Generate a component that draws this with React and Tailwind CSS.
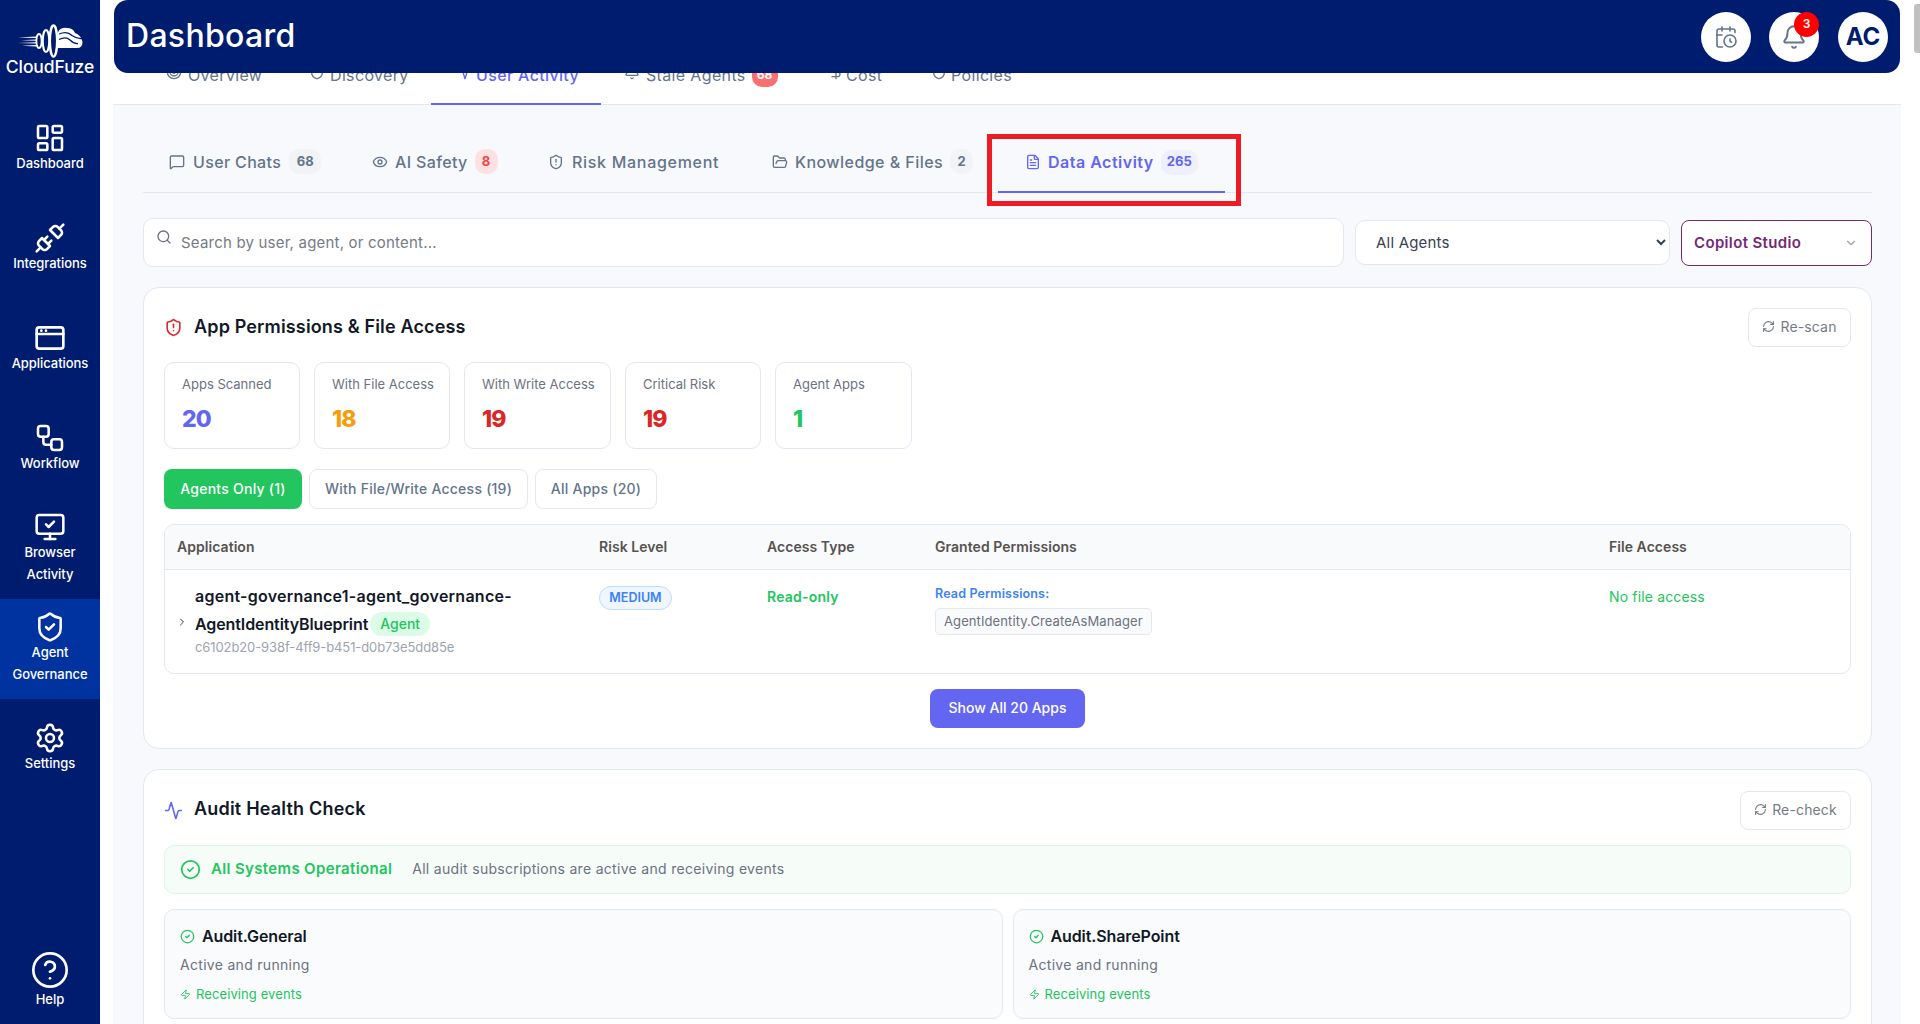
import React from "react";
import {
  LayoutDashboard, Unplug, Workflow, MonitorCheck, ShieldCheck, Settings, CircleHelp,
  CalendarClock, Bell, Target, Shield, Activity, DollarSign, MessageSquare, Eye, ShieldAlert,
  FolderOpen, FileText, Search, ChevronDown, ChevronRight, RefreshCw, CircleCheck, Zap,
} from "lucide-react";

function AppWin({ size = 32 }) {
  return (
    <svg width={size} height={size} viewBox="0 0 24 24" fill="none" stroke="currentColor" strokeWidth="2" strokeLinecap="round" strokeLinejoin="round">
      <rect x="2" y="4" width="20" height="16" rx="2" />
      <path d="M2 9h20M5.5 6.5h.01M9 6.5h.01" />
    </svg>
  );
}

function Logo() {
  return (
    <svg width="66" height="34" viewBox="0 0 66 34" fill="none">
      <path d="M1 13.5 L19 12.6 L19 14 Z M4 16.2 L19 15.4 L19 16.8 Z M1 19 L19 18.2 L19 19.6 Z M5 21.8 L19 21 L19 22.4 Z" fill="#fff" />
      <ellipse cx="22" cy="17" rx="2.6" ry="7" stroke="#fff" strokeWidth="1.8" />
      <ellipse cx="29" cy="17" rx="3.2" ry="11" stroke="#fff" strokeWidth="2" />
      <ellipse cx="36.5" cy="17" rx="3.6" ry="15.5" stroke="#fff" strokeWidth="2.3" />
      <path d="M41 24 L41 8 Q44 3 50 4 Q56 4 58 9 Q64 11 65.5 18 Q65.5 24 60 24 Z" fill="#fff" />
      <path d="M42 10 Q50 6.5 55 11.5 Q60 15 65 14.5 M42 15.5 Q49 12 53 16 Q57 20 61 19.5" stroke="#001c6e" strokeWidth="1.3" />
    </svg>
  );
}

const navItems = [
  { icon: <LayoutDashboard size={32} strokeWidth={1.9} />, label: ["Dashboard"] },
  { icon: <Unplug size={32} strokeWidth={1.9} />, label: ["Integrations"] },
  { icon: <AppWin />, label: ["Applications"] },
  { icon: <Workflow size={32} strokeWidth={1.9} />, label: ["Workflow"] },
  { icon: <MonitorCheck size={32} strokeWidth={1.9} />, label: ["Browser", "Activity"] },
  { icon: <ShieldCheck size={32} strokeWidth={1.9} />, label: ["Agent", "Governance"], active: true },
  { icon: <Settings size={32} strokeWidth={1.9} />, label: ["Settings"] },
];

function NavItem({ icon, label, active }) {
  return (
    <div className={"h-[100px] flex flex-col items-center justify-center pb-[3px] text-white " + (active ? "bg-[#0033a0]" : "")}>
      {icon}
      <div className="-mt-[2px] text-center text-[13px] font-medium leading-[22px] tracking-[-0.05px]">
        {label.map((l) => (
          <div key={l}>{l}</div>
        ))}
      </div>
    </div>
  );
}

function Sidebar() {
  return (
    <aside className="w-[100px] shrink-0 bg-[#001c6e] flex flex-col h-full">
      <div className="h-[99px] flex flex-col items-center pt-[24px]">
        <Logo />
        <div className="text-white text-[17.5px] font-medium leading-[22px] -mt-[2px] tracking-[-0.1px]">CloudFuze</div>
      </div>
      {navItems.map((n) => (
        <NavItem key={n.label[0]} {...n} />
      ))}
      <div className="mt-auto pb-[14px] flex flex-col items-center text-white">
        <CircleHelp size={40} strokeWidth={1.6} />
        <div className="text-[13px] font-medium leading-[22px] -mt-[2px]">Help</div>
      </div>
    </aside>
  );
}

function Header() {
  return (
    <header className="absolute z-10 top-0 left-[114px] right-[20px] h-[73px] bg-[#001c6e] rounded-[14px] flex items-center pl-[12px] pr-[12px]">
      <h1 className="text-white text-[32px] font-medium leading-none tracking-[0.3px] -mt-[2px]">Dashboard</h1>
      <div className="ml-auto flex items-center gap-[19px]">
        <div className="w-[50px] h-[50px] -mr-[1px] rounded-full bg-white flex items-center justify-center text-[#64748b]">
          <CalendarClock size={24} strokeWidth={1.6} />
        </div>
        <div className="relative w-[50px] h-[50px] rounded-full bg-white flex items-center justify-center text-[#64748b]">
          <Bell size={26} strokeWidth={1.8} />
          <span className="absolute top-0 right-0 w-[25px] h-[25px] rounded-full bg-[#ff0000] text-white text-[12px] font-semibold flex items-center justify-center">3</span>
        </div>
        <div className="w-[50px] h-[50px] rounded-full bg-white flex items-center justify-center text-[#001c6e] text-[24px] font-bold">AC</div>
      </div>
    </header>
  );
}

function TopTabs() {
  return (
    <div className="h-[105px] bg-white border-b border-[#e2e8f0] pl-[29px] flex items-end">
      <div className="flex h-[58px] -mb-[1px] text-[16px] tracking-[0.35px] text-[#64748b]">
        <div className="w-[143px] flex items-center gap-[6px] pl-[24px] border-b-2 border-transparent"><Target size={16} className="-mt-[6px] shrink-0" /><span>Overview</span></div>
        <div className="w-[146px] flex items-center gap-[5px] pl-[24px] border-b-2 border-transparent"><Shield size={16} className="-mt-[6px] shrink-0" /><span>Discovery</span></div>
        <div className="w-[170px] flex items-center gap-[5px] pl-[24px] border-b-2 border-[#6366f1] text-[#6366f1] font-medium"><Activity size={16} className="-mt-[6px] shrink-0" /><span>User Activity</span></div>
        <div className="w-[203px] flex items-center gap-[6px] pl-[23px] border-b-2 border-transparent"><Bell size={16} className="-mt-[6px] shrink-0" /><span>Stale Agents</span><span className="h-[24px] w-[26px] rounded-[10px] bg-[#f87171] text-white text-[12px] font-bold tracking-normal flex items-center justify-center">68</span></div>
        <div className="w-[103px] flex items-center gap-[2px] pl-[24px] border-b-2 border-transparent"><DollarSign size={16} className="-mt-[6px] shrink-0" /><span>Cost</span></div>
        <div className="w-[130px] flex items-center gap-[4px] pl-[24px] border-b-2 border-transparent"><Shield size={16} className="-mt-[6px] shrink-0" /><span>Policies</span></div>
      </div>
    </div>
  );
}

function SubTabs() {
  const count = "h-[25px] rounded-[10px] flex items-center justify-center text-[13px] font-bold tracking-normal";
  return (
    <div className="flex h-[60px] border-b border-[#e2e8f0] text-[16px] font-medium tracking-[0.35px] text-[#64748b]">
      <div className="w-[203px] pb-[2px] flex items-center gap-[8px] pl-[26px]">
        <MessageSquare size={16} className="shrink-0" /><span>User Chats</span>
        <span className={count + " w-[32px] bg-[#f1f3f7] text-[#64748b]"}>68</span>
      </div>
      <div className="w-[176px] pb-[2px] flex items-center gap-[7px] pl-[26px]">
        <Eye size={16} className="shrink-0" /><span>AI Safety</span>
        <span className={count + " w-[23px] bg-[#fee2e2] text-[#ef4444]"}>8</span>
      </div>
      <div className="w-[226px] pb-[2px] flex items-center gap-[8px] pl-[26px] tracking-[0.7px]">
        <ShieldAlert size={16} className="shrink-0" /><span>Risk Management</span>
      </div>
      <div className="w-[250px] pb-[2px] flex items-center gap-[7px] pl-[24px] tracking-[0.45px]">
        <FolderOpen size={16} className="shrink-0" /><span>Knowledge &amp; Files</span>
        <span className={count + " w-[23px] bg-[#f1f3f7] text-[#64748b]"}>2</span>
      </div>
      <div className="relative w-[227px] h-[60px] -mb-[1px] flex items-center gap-[7px] pl-[27px] border-b-2 border-[#6366f1] text-[#6366f1] font-semibold tracking-[0.5px]">
        <FileText size={16} className="shrink-0" /><span>Data Activity</span>
        <span className={count + " w-[37px] bg-[#eef0fd] text-[#6366f1]"}>265</span>
        <span className="absolute -left-[11px] top-[1px] w-[254px] h-[72px] border-[5px] border-[#ed1c24] pointer-events-none" />
      </div>
    </div>
  );
}

function Filters() {
  return (
    <div className="mt-[25px] flex items-center gap-[11px]">
      <div className="relative flex-1 h-[49px] bg-white border border-[#e2e8f0] rounded-[10px] flex items-center pl-[37px]">
        <Search size={16} className="absolute left-[12px] top-[10px] text-[#6b7280]" />
        <input
          className="w-full pt-[1px] bg-transparent outline-none text-[15px] tracking-[0.2px] text-[#374151] placeholder:text-[#757b86]"
          placeholder="Search by user, agent, or content..."
          readOnly
        />
      </div>
      <select className="w-[315px] h-[45px] bg-white border border-[#e2e8f0] rounded-[10px] pl-[16px] text-[15px] tracking-[0.2px] text-[#374151] outline-none">
        <option>All Agents</option>
      </select>
      <div className="w-[191px] h-[46px] pt-[1px] bg-white border border-[#742774] rounded-[8px] flex items-center pl-[12px] pr-[13px] text-[#742774] text-[15px] font-semibold tracking-[0.35px]">
        <span>Copilot Studio</span>
        <ChevronDown size={14} className="ml-auto text-[#9ca3af]" />
      </div>
    </div>
  );
}

const stats = [
  { label: "Apps Scanned", value: "20", w: "w-[136px]", c: "text-[#6366f1]" },
  { label: "With File Access", value: "18", w: "w-[136px]", c: "text-[#f59e0b]" },
  { label: "With Write Access", value: "19", w: "w-[147px]", c: "text-[#dc2626]" },
  { label: "Critical Risk", value: "19", w: "w-[136px]", c: "text-[#dc2626]" },
  { label: "Agent Apps", value: "1", w: "w-[137px]", c: "text-[#22c55e]" },
];

function GhostButton({ w, children }) {
  return (
    <button className={"h-[39px] pb-[2px] bg-white border border-[#e2e8f0] rounded-[8px] flex items-center justify-center gap-[5px] text-[14px] tracking-[0.15px] text-[#757b86] " + w}>
      <RefreshCw size={13} />
      {children}
    </button>
  );
}

function PermissionsCard() {
  return (
    <section className="mt-[20px] bg-white border border-[#e2e8f0] rounded-[16px] px-[20px] pt-[20px] pb-[20px]">
      <div className="flex items-center h-[39px]">
        <ShieldAlert size={19} className="text-[#dc2626] shrink-0" />
        <h2 className="ml-[11px] -mt-[3px] text-[18px] font-semibold tracking-[0.15px] text-[#111827]">App Permissions &amp; File Access</h2>
        <div className="ml-auto"><GhostButton w="w-[103px]">Re-scan</GhostButton></div>
      </div>

      <div className="mt-[15px] flex gap-[14px]">
        {stats.map((s) => (
          <div key={s.label} className={"h-[87px] bg-white border border-[#e2e8f0] rounded-[10px] pl-[17px] pt-[11px] " + s.w}>
            <div className="text-[13px] leading-[20px] text-[#6b7280] whitespace-nowrap">{s.label}</div>
            <div className={"mt-[9px] text-[23px] leading-[32px] font-extrabold tracking-[-0.8px] " + s.c}>{s.value}</div>
          </div>
        ))}
      </div>

      <div className="mt-[20px] flex gap-[7px] text-[14px] font-medium tracking-[0.25px]">
        <button className="w-[138px] h-[40px] pb-[2px] rounded-[8px] bg-[#22c55e] text-white">Agents Only (1)</button>
        <button className="w-[219px] h-[40px] pb-[2px] rounded-[8px] bg-white border border-[#e2e8f0] text-[#64748b]">With File/Write Access (19)</button>
        <button className="w-[122px] h-[40px] pb-[2px] rounded-[8px] bg-white border border-[#e2e8f0] text-[#64748b]">All Apps (20)</button>
      </div>

      <div className="mt-[15px] border border-[#e2e8f0] rounded-[10px] overflow-hidden">
        <div className="grid grid-cols-[434px_168px_168px_674px_1fr] h-[45px] pb-[2px] items-center bg-[#f8fafc] border-b border-[#e2e8f0] text-[14px] font-semibold text-[#57534e] tracking-[0.05px]">
          <div className="pl-[12px]">Application</div>
          <div>Risk Level</div>
          <div>Access Type</div>
          <div>Granted Permissions</div>
          <div>File Access</div>
        </div>
        <div className="grid grid-cols-[434px_168px_168px_674px_1fr] h-[103px]">
          <div className="flex items-center pl-[11px]">
            <ChevronRight size={12} className="shrink-0 text-[#374151]" />
            <div className="ml-[7px] pb-[3px]">
              <div className="text-[16px] leading-[27px] font-semibold text-[#111827] tracking-[0.25px] whitespace-nowrap">agent-governance1-agent_governance-</div>
              <div className="flex items-center h-[27px]">
                <span className="text-[16px] font-semibold text-[#111827] tracking-[-0.1px]">AgentIdentityBlueprint</span>
                <span className="ml-[2px] h-[24px] px-[10px] rounded-full bg-[#dcfce7] text-[#22c55e] text-[14px] font-medium flex items-center">Agent</span>
              </div>
              <div className="text-[13px] leading-[20px] text-[#9ca3af] tracking-[-0.1px]">c6102b20-938f-4ff9-b451-d0b73e5dd85e</div>
            </div>
          </div>
          <div className="pt-[14px]">
            <span className="inline-flex items-center justify-center w-[73px] h-[24px] rounded-full bg-[#eff6ff] border border-[#bfdbfe] text-[#3b82f6] text-[12.5px] font-semibold">MEDIUM</span>
          </div>
          <div className="pt-[16px] text-[14px] leading-[22px] font-semibold text-[#22c55e] tracking-[0.2px]">Read-only</div>
          <div className="pt-[15px]">
            <div className="text-[12.5px] leading-[18px] font-semibold text-[#3b82f6] tracking-[0.15px]">Read Permissions:</div>
            <span className="mt-[5px] inline-flex items-center h-[27px] px-[8px] bg-[#f9fafb] border border-[#e5e7eb] rounded-[5px] text-[13px] text-[#6b7280] tracking-[0.1px]">AgentIdentity.CreateAsManager</span>
          </div>
          <div className="pt-[16px] text-[14px] leading-[22px] text-[#22c55e] tracking-[0.15px]">No file access</div>
        </div>
      </div>

      <div className="mt-[15px] flex justify-center">
        <button className="w-[155px] h-[39px] pb-[3px] rounded-[8px] bg-[#6366f1] text-white text-[14px] font-medium">Show All 20 Apps</button>
      </div>
    </section>
  );
}

function ServiceCard({ name }) {
  return (
    <div className="h-[110px] bg-[#fafbfc] border border-[#e2e8f0] rounded-[10px] px-[15px] pt-[14px]">
      <div className="flex items-center gap-[7px] h-[24px]">
        <CircleCheck size={15} className="text-[#22c55e] shrink-0" />
        <span className="text-[16px] font-semibold text-[#111827] tracking-[-0.1px]">{name}</span>
      </div>
      <div className="mt-[7px] text-[14px] leading-[20px] text-[#6b7280] tracking-[0.3px]">Active and running</div>
      <div className="mt-[9px] flex items-center gap-[5px] text-[13px] leading-[20px] text-[#22c55e] tracking-[0.1px]">
        <Zap size={11} className="shrink-0" />
        Receiving events
      </div>
    </div>
  );
}

function AuditCard() {
  return (
    <section className="mt-[20px] bg-white border border-[#e2e8f0] rounded-[16px] px-[20px] pt-[20px] pb-[40px]">
      <div className="flex items-center h-[40px]">
        <Activity size={19} className="text-[#6366f1] shrink-0" />
        <h2 className="ml-[11px] -mt-[3px] text-[18px] font-semibold tracking-[0.2px] text-[#111827]">Audit Health Check</h2>
        <div className="ml-auto"><GhostButton w="w-[111px]">Re-check</GhostButton></div>
      </div>
      <div className="mt-[15px] h-[49px] rounded-[10px] bg-[#f6fcf8] border border-[#dcf5e5] flex items-center pl-[15px]">
        <CircleCheck size={21} className="text-[#22c55e] shrink-0" />
        <span className="ml-[10px] text-[15px] font-semibold text-[#22c55e] tracking-[0.35px]">All Systems Operational</span>
        <span className="ml-[20px] -mt-[2px] text-[14px] text-[#6b7280] tracking-[0.3px]">All audit subscriptions are active and receiving events</span>
      </div>
      <div className="mt-[15px] grid grid-cols-2 gap-[10px]">
        <ServiceCard name="Audit.General" />
        <ServiceCard name="Audit.SharePoint" />
      </div>
    </section>
  );
}

export default function App() {
  return (
    <div className="relative h-screen w-full overflow-hidden flex bg-white [font-family:Inter,sans-serif]">
      <Sidebar />
      <main className="flex-1 min-w-0 pl-[13px] pr-[19px] h-full overflow-hidden">
        <div className="bg-[#f7f9fc] min-h-full">
          <TopTabs />
          <div className="pt-[28px] pl-[30px] pr-[29px]">
            <SubTabs />
            <Filters />
            <PermissionsCard />
            <AuditCard />
          </div>
        </div>
      </main>
      <Header />
      <div className="absolute right-0 top-[4px] w-[6px] h-[49px] rounded-l-[3px] bg-[#c1c1c1]" />
    </div>
  );
}
